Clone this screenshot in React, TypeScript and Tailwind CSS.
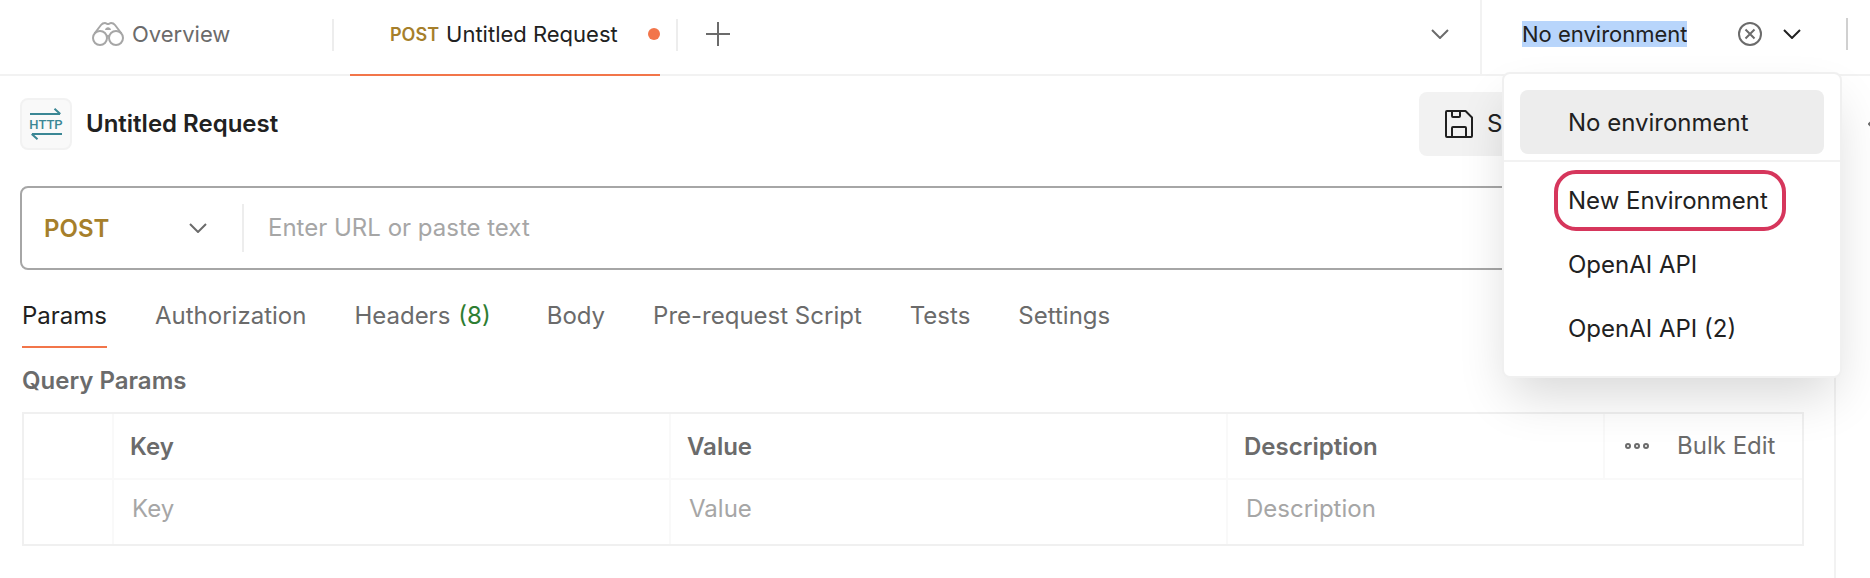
import React from "react";

function Chevron({ className }: { className?: string }) {
  return (
    <svg className={className} width="18" height="10" viewBox="0 0 18 10" fill="none" stroke="currentColor" strokeWidth="2" aria-hidden="true">
      <path d="M1 1l8 8 8-8" />
    </svg>
  );
}

function BinocularsIcon() {
  return (
    <svg width="32" height="24" viewBox="0 0 32 24" fill="none" stroke="#a6a6a6" strokeWidth="2" aria-hidden="true">
      <circle cx="8" cy="16" r="7" />
      <circle cx="24" cy="16" r="7" />
      <path d="M2.5 11.5L9 3c1-1.3 2.4-2 4-2 1.300 0 1.800 1 3 1s1.700-1 3-1c1.600 0 3 .7 4 2l6.500 8.500" />
      <path d="M13 8c.3-1.800 1.500-2.800 3-2.800S18.700 6.200 19 8z" fill="#a6a6a6" stroke="none" />
      <path d="M15 14.500c.6-.6 1.400-.6 2 0" />
    </svg>
  );
}

function HttpIcon() {
  return (
    <svg className="overflow-visible" width="32" height="32" viewBox="0 0 32 32" fill="none" stroke="#3b8795" strokeWidth="2" aria-hidden="true">
      <path d="M0 6h30M24.500 .8l5.800 5.200M32 26H2M7.500 31.200L1.700 26" />
      <text x="16" y="21" textAnchor="middle" fill="#3b8795" stroke="none" className="font-[Roboto,sans-serif] text-[13px] font-medium">
        HTTP
      </text>
    </svg>
  );
}

function SaveIcon() {
  return (
    <svg width="28" height="28" viewBox="0 0 28 28" fill="none" stroke="#212121" strokeWidth="2" strokeLinejoin="round" aria-hidden="true">
      <path d="M2 1h18.500L27 7.500V26a1 1 0 0 1-1 1H2a1 1 0 0 1-1-1V2a1 1 0 0 1 1-1z" />
      <path d="M7 1v5a1 1 0 0 0 1 1h6a1 1 0 0 0 1-1V1M7 27v-9a1 1 0 0 1 1-1h12a1 1 0 0 1 1 1v9" />
    </svg>
  );
}

const sections = ["Params", "Authorization", "Headers", "Body", "Pre-request Script", "Tests", "Settings"];
const environments = ["New Environment", "OpenAI API", "OpenAI API (2)"];

function TopBar() {
  return (
    <header className="flex h-[76px] border-b-2 border-[#f2f2f2]">
      <nav aria-label="Open tabs" className="flex min-w-0 flex-1">
        <button className="flex h-[68px] w-[332px] shrink-0 items-center gap-2 pl-[92px] text-[22px] text-[#6b6b6b]">
          <BinocularsIcon />
          Overview
        </button>
        <span className="mt-[19px] h-8 w-[2px] bg-[#ededed]" />
        <button className="ml-4 flex h-[76px] w-[310px] shrink-0 items-center border-b-2 border-[#f2754a] pb-[6px] pl-10 text-[22px] text-[#212121]">
          <span className="mr-[7px] pt-[2px] text-[18px] font-semibold text-[#a67f2b]">POST</span>
          Untitled Request
          <span className="ml-auto size-3 rounded-full bg-[#f2754a]" />
        </button>
        <span className="mt-[19px] ml-4 h-8 w-[2px] bg-[#ededed]" />
        <button aria-label="New tab" className="ml-7 flex h-[68px] items-center text-[#6b6b6b]">
          <svg width="24" height="24" viewBox="0 0 24 24" stroke="currentColor" strokeWidth="2" aria-hidden="true">
            <path d="M12 0v24M0 12h24" />
          </svg>
        </button>
        <button aria-label="Search tabs" className="mr-[31px] ml-auto flex h-[68px] items-center text-[#6b6b6b]">
          <Chevron />
        </button>
      </nav>
      <div className="relative flex w-[390px] shrink-0 border-l-2 border-[#f2f2f2]">
        <div className="flex h-[68px] flex-1 items-center pl-10">
          <input
            aria-label="Environment"
            defaultValue="No environment"
            className="h-[26px] w-[165px] bg-[#b8d5fb] text-[22px] text-[#212121] outline-none"
          />
          <button aria-label="Clear environment" className="ml-auto text-[#6b6b6b]">
            <svg width="24" height="24" viewBox="0 0 24 24" fill="none" stroke="currentColor" strokeWidth="2" aria-hidden="true">
              <circle cx="12" cy="12" r="11" />
              <path d="M7.500 7.500l9 9M16.500 7.500l-9 9" />
            </svg>
          </button>
          <button aria-label="Show environments" className="mr-[45px] ml-[21px] text-[#212121]">
            <Chevron />
          </button>
          <span className="mr-[22px] h-8 w-[2px] bg-[#d0d0d0]" />
        </div>
        <EnvironmentMenu />
      </div>
    </header>
  );
}

function EnvironmentMenu() {
  return (
    <div
      role="listbox"
      aria-label="Environments"
      className="absolute top-[72px] right-[28px] z-10 w-[340px] rounded-lg border-2 border-[#f0f0f0] bg-white pt-4 pb-4 text-2xl text-[#212121] shadow-[0_24px_48px_-8px_rgba(0,0,0,0.16)]"
    >
      <button role="option" aria-selected="true" className="mx-4 flex h-16 w-[304px] items-center rounded-lg bg-[#ededed] pt-[2px] pl-12">
        No environment
      </button>
      <div className="mt-[6px] mb-[6px] h-[2px] bg-[#f2f2f2]" />
      {environments.map((name, i) => (
        <button key={name} role="option" aria-selected="false" className="relative mx-4 flex h-16 w-[304px] items-center pt-[2px] pl-12">
          {name}
          {i === 0 && <span className="absolute top-[2px] left-[34px] h-[61px] w-[232px] rounded-[22px] border-4 border-[#d6365c]" />}
        </button>
      ))}
    </div>
  );
}

function ParamsTable() {
  const head = "border-b-2 border-[#f9f9f9] text-left font-semibold text-[#6b6b6b]";
  const field = "block w-full bg-transparent pl-4 text-2xl text-[#212121] outline-none placeholder:text-[#a6a6a6]";
  return (
    <table className="mt-3 w-full table-fixed border-separate border-spacing-0 border-2 border-[#f0f0f0] text-2xl">
      <colgroup>
        <col className="w-[90px]" />
        <col />
        <col />
        <col className="w-[377px]" />
        <col className="w-[197px]" />
      </colgroup>
      <thead>
        <tr className="h-[66px]">
          <th className={`${head} border-r-2`} aria-label="Enabled" />
          <th className={`${head} border-r-2 pt-[2px] pl-4`}>Key</th>
          <th className={`${head} border-r-2 pt-[2px] pl-4`}>Value</th>
          <th className={`${head} border-r-2 pt-[2px] pl-4`}>Description</th>
          <th className={`${head} pl-5`}>
            <div className="flex items-center gap-7 font-normal">
              <button aria-label="More options">
                <svg width="24" height="6" viewBox="0 0 24 6" fill="none" stroke="#6b6b6b" strokeWidth="2" aria-hidden="true">
                  <circle cx="3" cy="3" r="2" />
                  <circle cx="12" cy="3" r="2" />
                  <circle cx="21" cy="3" r="2" />
                </svg>
              </button>
              <button>Bulk Edit</button>
            </div>
          </th>
        </tr>
      </thead>
      <tbody>
        <tr className="h-16">
          <td className="border-r-2 border-[#f9f9f9]" />
          <td className="border-r-2 border-[#f9f9f9] pb-[6px] pl-[2px]"><input aria-label="Key" placeholder="Key" className={field} /></td>
          <td className="border-r-2 border-[#f9f9f9] pb-[6px] pl-[2px]"><input aria-label="Value" placeholder="Value" className={field} /></td>
          <td colSpan={2} className="pb-[6px] pl-[2px]"><input aria-label="Description" placeholder="Description" className={field} /></td>
        </tr>
      </tbody>
    </table>
  );
}

export default function App() {
  return (
    <div className="flex min-h-screen flex-col overflow-hidden bg-white font-['Inter',sans-serif] leading-8">
      <TopBar />
      <div className="flex flex-1">
        <main className="min-w-0 flex-1 border-r-2 border-[#f2f2f2] pt-4 pr-[30px] pl-5">
          <div className="flex items-center">
            <span className="flex size-[52px] items-center justify-center rounded-lg border-2 border-[#f2f2f2] bg-[#f9f9f9]">
              <HttpIcon />
            </span>
            <h1 className="ml-[14px] text-2xl font-semibold text-[#212121]">Untitled Request</h1>
            <button className="mr-[213px] ml-auto flex h-16 w-[172px] items-center gap-[14px] rounded-lg bg-[#f2f2f2] pl-[26px] text-2xl text-[#212121]">
              <SaveIcon />
              Save
            </button>
          </div>
          <form className="mt-[30px] mr-[184px] flex h-[84px] items-center rounded-lg border-2 border-[#a6a6a6]">
            <div className="relative flex h-12 w-[222px] items-center border-r-2 border-[#ededed]">
              <select aria-label="Method" className="w-full appearance-none bg-transparent pt-[2px] pl-[22px] text-2xl font-semibold text-[#a67f2b] outline-none">
                <option>POST</option>
                <option>GET</option>
              </select>
              <Chevron className="pointer-events-none absolute right-[35px] text-[#6b6b6b]" />
            </div>
            <input aria-label="Request URL" placeholder="Enter URL or paste text" className="ml-6 min-w-0 flex-1 text-2xl text-[#212121] outline-none placeholder:text-[#a6a6a6]" />
          </form>
          <div className="pl-[2px]">
            <nav aria-label="Request sections" className="mt-[30px] flex gap-12 text-2xl text-[#6b6b6b]">
              {sections.map((name, i) => (
                <button key={name} className={i === 0 ? "h-12 border-b-2 border-[#f2754a] pb-[14px] text-[#212121]" : "h-12 border-b-2 border-transparent pb-[14px]"}>
                  {name}
                  {name === "Headers" && <span className="mx-2 text-[#2e7d32]">(8)</span>}
                </button>
              ))}
            </nav>
            <h2 className="mt-4 mb-[14px] text-2xl leading-[34px] font-semibold text-[#6b6b6b]">Query Params</h2>
            <ParamsTable />
          </div>
        </main>
        <aside className="flex w-[34px] shrink-0 justify-end pt-[42px]">
          <button aria-label="Expand sidebar" className="h-3 w-[2px] overflow-hidden text-[#6b6b6b]">
            <svg width="12" height="12" viewBox="0 0 12 12" fill="none" stroke="currentColor" strokeWidth="2" aria-hidden="true">
              <path d="M7 0L1 6l6 6" />
            </svg>
          </button>
        </aside>
      </div>
    </div>
  );
}
